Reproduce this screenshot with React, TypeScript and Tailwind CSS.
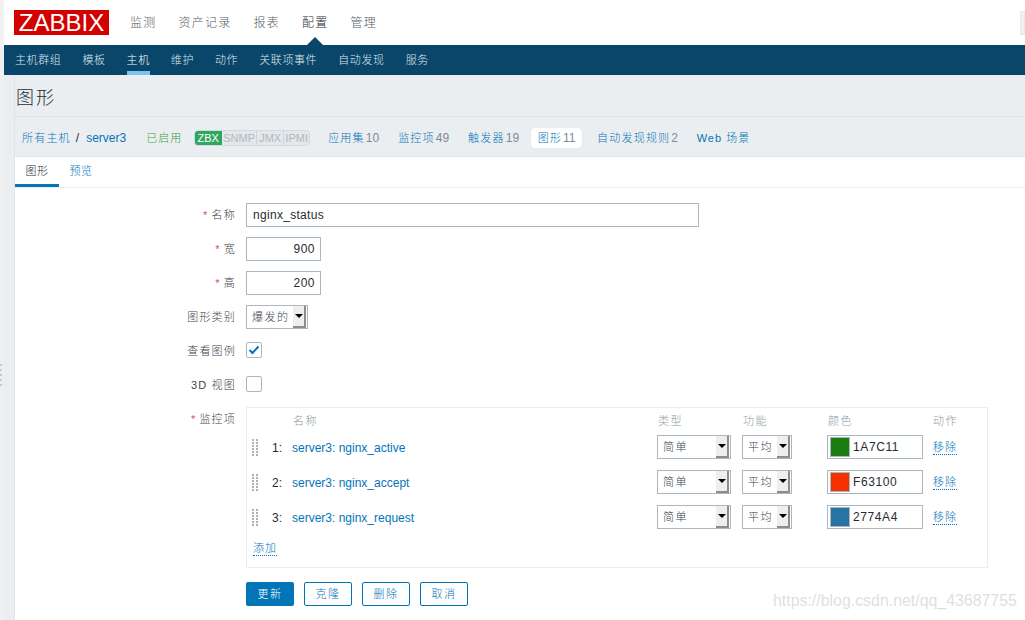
import React from "react";

function Select({ label, w }: { label: string; w: string }) {
  return (
    <div className={`${w} h-6 flex items-center border border-[#a8b7c0] bg-white pl-[5px] pr-px text-[11px] tracking-[1.5px] text-[#3a4249]`}>
      <span className="flex-1 pt-px whitespace-nowrap overflow-hidden">{label}</span>
      <span className="w-[13px] h-[22px] flex items-center justify-center bg-[#eeeeee] border-r-2 border-b-2 border-[#8c8c8c]">
        <span className="w-0 h-0 border-l-[4px] border-r-[4px] border-t-[4px] border-l-transparent border-r-transparent border-t-black" />
      </span>
    </div>
  );
}

function Row({ label, req, children }: { label: string; req?: boolean; children: React.ReactNode }) {
  return (
    <div className="flex items-center min-h-6">
      <div className="w-[221px] mr-[10px] text-right text-[11px] tracking-[1.2px] text-[#3c454c] whitespace-nowrap">
        {req && <span className="text-[#d8505a] mr-[3px]">*</span>}
        {label}
      </div>
      {children}
    </div>
  );
}

const items = [
  { n: "1:", name: "server3: nginx_active", c: "1A7C11", bg: "bg-[#1a7c11]" },
  { n: "2:", name: "server3: nginx_accept", c: "F63100", bg: "bg-[#f63100]" },
  { n: "3:", name: "server3: nginx_request", c: "2774A4", bg: "bg-[#2774a4]" },
];

function Handle() {
  return (
    <div className="grid grid-cols-2 gap-x-[2px] gap-y-[1px] w-[6px] ml-[5px]">
      {Array.from({ length: 12 }).map((_, i) => (
        <span key={i} className="w-[2px] h-[2px] bg-[#aab3b9]" />
      ))}
    </div>
  );
}

function Crumb({ label, count }: { label: string; count?: string }) {
  return (
    <span className="whitespace-nowrap">
      <span className="text-[#0275b8] text-[11px] tracking-[1.2px]">{label}</span>
      {count && <span className="text-[#768d99] text-xs ml-px">{count}</span>}
    </span>
  );
}

const gridCols = "grid grid-cols-[46px_364px_85px_85px_106px_1fr] items-center";

export default function App() {
  return (
    <div className="relative w-[1025px] h-[620px] overflow-hidden flex bg-[#f0f0f0] font-light font-['Liberation_Sans','Noto_Sans_CJK_SC',sans-serif] text-xs text-[#1f2c33]">
      <div className="w-1 shrink-0" />
      <div className="flex-1 flex flex-col min-w-0">
        {/* Top nav */}
        <header className="relative h-[45px] bg-white flex items-start pl-[10px] pt-[10px] shrink-0">
          <div className="w-[95px] h-[25px] bg-[#d40000] text-white text-[24px] leading-[25px] text-center mr-[21px]">ZABBIX</div>
          <nav className="flex gap-[22px] pt-[5px] text-[12px] tracking-[1.25px] text-[#555e63] leading-4">
            <span>监测</span>
            <span>资产记录</span>
            <span>报表</span>
            <span className="text-[#1f2c33]">配置</span>
            <span>管理</span>
          </nav>
          <span className="absolute left-[303px] top-[37px] w-0 h-0 border-l-[8px] border-r-[8px] border-b-[8px] border-l-transparent border-r-transparent border-b-[#0a466a]" />
          <span className="absolute right-0 top-[11px] w-[5px] h-6 bg-[#f0f0f0] border border-[#e8e8e8]" />
        </header>
        {/* Sub nav */}
        <nav className="h-[30px] bg-[#0a466a] flex pl-[11px] gap-[21px] text-[11px] tracking-[0.6px] text-[#dfe7ec] shrink-0">
          {["主机群组", "模板", "主机", "维护", "动作", "关联项事件", "自动发现", "服务"].map((t) => (
            <span key={t} className={`flex items-center h-full border-b-4 pt-1 ${t === "主机" ? "border-[#7cc4ef] text-white" : "border-transparent"}`}>{t}</span>
          ))}
        </nav>
        <div className="flex-1 flex min-h-0 bg-[#ebeef1]">
          <div className="w-[11px] shrink-0 border-r border-[#dfe4e7]" />
          <div className="flex-1 flex flex-col min-w-0">
            {/* Title */}
            <div className="h-[42px] flex items-center pl-px pt-1 border-b border-[#dfe4e7] text-[18px] tracking-[2px] text-[#1f2c33] shrink-0">图形</div>
            {/* Breadcrumbs */}
            <div className="h-10 flex items-center pl-[7px] pt-[3px] border-b border-[#dfe4e7] shrink-0 -mr-px">
              <Crumb label="所有主机" />
              <span className="mx-[5px] text-xs">/</span>
              <span className="text-[#0275b8] text-xs ml-[2px]">server3</span>
              <span className="ml-5 text-[#429e47] text-[11px] tracking-[1px]">已启用</span>
              <div className="ml-[12px] flex h-4 text-[11px] leading-[14px] rounded-sm overflow-hidden text-[#aeb8bd] bg-[#e4e8eb] border border-[#d3d9dd]">
                <span className="w-7 -ml-px text-center bg-[#2fa85f] text-white">ZBX</span>
                <span className="w-[35px] text-center border-r border-[#cfd6da]">SNMP</span>
                <span className="w-[27px] text-center border-r border-[#cfd6da]">JMX</span>
                <span className="w-[25px] text-center">IPMI</span>
              </div>
              <div className="ml-[18px] flex items-center gap-[19px]">
                <Crumb label="应用集" count="10" />
                <Crumb label="监控项" count="49" />
                <Crumb label="触发器" count="19" />
              </div>
              <div className="ml-[12px] h-5 w-[51px] bg-white rounded-sm flex items-center justify-center shadow-[0_0_1px_#c8d0d4]">
                <Crumb label="图形" count="11" />
              </div>
              <div className="ml-[15px] tracking-tight"><Crumb label="自动发现规则" count="2" /></div>
              <div className="ml-[19px] text-[#0275b8] text-[11px] tracking-[1px]">Web 场景</div>
            </div>
            {/* White panel */}
            <main className="flex-1 bg-white flex flex-col min-h-0">
              <div className="h-[31px] flex border-b border-[#ebeef1] shrink-0 text-[11px] tracking-[0.6px]">
                <div className="w-11 h-[30px] pt-px border-b-[3px] border-[#0275b8] flex items-center justify-center text-[#1f2c33]">图形</div>
                <div className="w-11 h-[30px] pb-px flex items-center justify-center text-[#0275b8]">预览</div>
              </div>
              <div className="pt-[15px] flex flex-col gap-[10px]">
                <Row label="名称" req>
                  <div className="w-[453px] h-6 border border-[#a8b7c0] pl-[6px] leading-[22px] tracking-[0.3px]">nginx_status</div>
                </Row>
                <Row label="宽" req>
                  <div className="w-[75px] h-6 border border-[#a8b7c0] pr-[5px] text-right leading-[22px] tracking-[0.5px]">900</div>
                </Row>
                <Row label="高" req>
                  <div className="w-[75px] h-6 border border-[#a8b7c0] pr-[5px] text-right leading-[22px] tracking-[0.5px]">200</div>
                </Row>
                <Row label="图形类别">
                  <Select label="爆发的" w="w-[62px]" />
                </Row>
                <Row label="查看图例">
                  <div className="w-4 h-4 mb-[2px] border border-[#a8b7c0] rounded-[2px] flex items-center justify-center">
                    <svg width="12" height="10" viewBox="0 0 12 10" fill="none" stroke="#0275b8" strokeWidth="2"><path d="M1.5 5 L4.5 8 L10.5 1.5" /></svg>
                  </div>
                </Row>
                <Row label="3D 视图">
                  <div className="w-4 h-4 mb-[2px] border border-[#a8b7c0] rounded-[2px]" />
                </Row>
                <div className="flex items-start">
                  <div className="w-[221px] mr-[10px] text-right text-[11px] tracking-[1.2px] text-[#3c454c] pt-[5px]">
                    <span className="text-[#d8505a] mr-[3px]">*</span>监控项
                  </div>
                  <div className="w-[742px] h-[161px] border border-[#ebeef1] flex flex-col">
                    <div className={`${gridCols} h-[26px] text-[11px] tracking-[1.5px] text-[#8d9aa2]`}>
                      <span />
                      <span>名称</span>
                      <span className="pl-px">类型</span>
                      <span className="pl-px">功能</span>
                      <span className="pl-px">颜色</span>
                      <span>动作</span>
                    </div>
                    <div className="flex flex-col gap-[11px] pt-px">
                      {items.map((it) => (
                        <div key={it.n} className={`${gridCols} h-6`}>
                          <div className="flex items-center">
                            <Handle />
                            <span className="ml-[14px] pt-[2px] text-xs">{it.n}</span>
                          </div>
                          <span className="text-[#0275b8] -ml-px pt-[2px]">{it.name}</span>
                          <Select label="简单" w="w-[74px]" />
                          <Select label="平均" w="w-[50px]" />
                          <div className="w-[96px] h-6 border border-[#a8b7c0] flex items-center pl-[2px] tracking-[0.6px]">
                            <span className={`w-5 h-[20px] ${it.bg} border border-[#a8b7c0] mr-[3px]`} />
                            {it.c}
                          </div>
                          <span className="w-fit mt-[2px] text-[#0275b8] text-[11px] tracking-[1px] border-b border-dotted border-[#0275b8] leading-[13px]">移除</span>
                        </div>
                      ))}
                    </div>
                    <span className="mt-[13px] ml-[6px] w-fit text-[#0275b8] text-[11px] tracking-[1px] border-b border-dotted border-[#0275b8] leading-[13px]">添加</span>
                  </div>
                </div>
                <div className="flex gap-[10px] pl-[231px] pt-[4px] text-[11px] tracking-[1.5px]">
                  <button className="w-12 h-6 rounded-[2px] bg-[#0275b8] text-white">更新</button>
                  <button className="w-12 h-6 rounded-[2px] border border-[#0275b8] text-[#0275b8]">克隆</button>
                  <button className="w-12 h-6 rounded-[2px] border border-[#0275b8] text-[#0275b8]">删除</button>
                  <button className="w-12 h-6 rounded-[2px] border border-[#0275b8] text-[#0275b8]">取消</button>
                </div>
              </div>
            </main>
          </div>
        </div>
      </div>
      {/* side handle */}
      <div className="absolute left-0 top-[364px] flex flex-col gap-[3px]">
        {[0, 1, 2, 3, 4].map((i) => (
          <span key={i} className="w-[2px] h-[2px] bg-[#c4c8ca]" />
        ))}
      </div>
      {/* Watermark */}
      <div className="absolute left-[773px] top-[591px] text-[15.9px] leading-5 text-[#dfdfdf] whitespace-nowrap">https://blog.csdn.net/qq_43687755</div>
    </div>
  );
}
